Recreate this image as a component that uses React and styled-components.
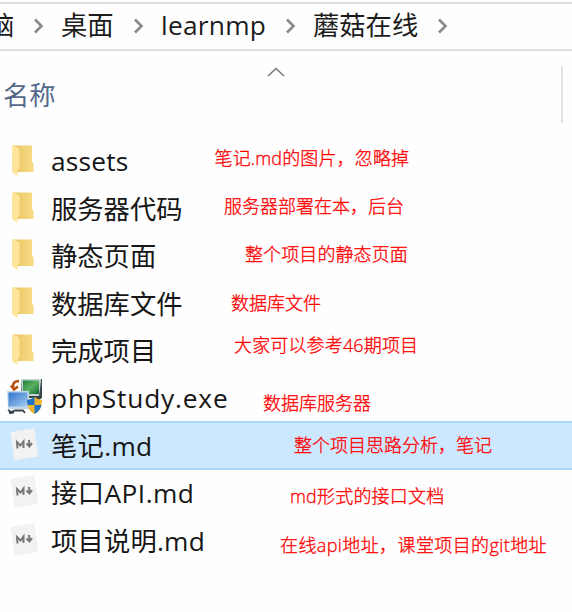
import React from "react";
import styled, { createGlobalStyle } from "styled-components";

const Global = createGlobalStyle`
  * { box-sizing: border-box; }
  body { margin: 0; background: #fff; font-family: "Open Sans", "Noto Sans CJK SC", sans-serif; }
`;

const Window = styled.main`
  width: 572px;
  height: 612px;
  overflow: hidden;
  background: #fefefe;
`;

const AddressBar = styled.nav`
  display: flex;
  align-items: center;
  height: 49px;
  margin-top: 2px;
  border-top: 2px solid #dedede;
  border-bottom: 2px solid #dedede;
`;

const Crumb = styled.span`
  flex: none;
  width: ${(p) => p.$width}px;
  margin-left: ${(p) => p.$gap}px;
  padding-bottom: 3px;
  font-size: 26.3px;
  line-height: 40px;
  letter-spacing: ${(p) => p.$spacing || 0}px;
  white-space: nowrap;
  color: #1c1c1c;
`;

const CrumbArrow = styled.svg`
  flex: none;
  width: 12px;
  height: 18px;
  margin-left: ${(p) => p.$gap}px;
  margin-bottom: 1px;
`;

const Header = styled.header`
  display: flex;
  justify-content: space-between;
  height: 86px;
  padding: 15px 9px 0 3px;
`;

const HeaderLabel = styled.span`
  flex: 1;
  padding-top: 9px;
  font-size: 26.3px;
  line-height: 40px;
  color: #53698a;
`;

const SortArrow = styled.svg`
  flex: none;
  width: 20px;
  height: 12px;
  margin-right: 275px;
`;

const Divider = styled.i`
  width: 2px;
  height: 57px;
  background: #e4e4e4;
`;

const FileList = styled.ul`
  margin: 0;
  padding: 0;
  list-style: none;
`;

const Row = styled.li`
  position: relative;
  display: flex;
  align-items: center;
  height: 47.4px;
  background: ${(p) => (p.$selected ? "#cce8ff" : "transparent")};
  box-shadow: ${(p) => (p.$selected ? "inset 0 2px #a9d6fb, inset 0 -1px #a9d6fb, 0 1px #a9d6fb" : "none")};
`;

const IconSlot = styled.span`
  flex: none;
  display: flex;
  width: 51px;
  height: 40px;
`;

const FileName = styled.span`
  padding-top: 1.4px;
  font-size: 26.3px;
  line-height: 40px;
  letter-spacing: ${(p) => p.$spacing || 0}px;
  white-space: nowrap;
  color: #161616;
`;

const Note = styled.span`
  position: absolute;
  left: ${(p) => p.$x}px;
  top: ${(p) => p.$y}px;
  font-size: 18px;
  font-weight: 300;
  line-height: 24px;
  letter-spacing: ${(p) => p.$spacing || 0}px;
  white-space: nowrap;
  color: #ff0000;
  -webkit-text-stroke: 0.3px #ff0000;
`;

const FolderIcon = () => (
  <svg width="44" height="40" viewBox="0 0 44 40">
    <defs>
      <linearGradient id="folder" x1="0" x2="1">
        <stop offset="0.2" stopColor="#ecc968" />
        <stop offset="1" stopColor="#f8dc86" />
      </linearGradient>
    </defs>
    <path d="M13 4.5H32V21L33.5 22.5V31H17Z" fill="url(#folder)" />
    <path d="M12 4.5L18 6.5Q19.5 7.5 19.5 9.5V27.5L17.5 29.5V35L12 31Z" fill="#ffe59c" />
  </svg>
);

const MarkdownIcon = () => (
  <svg width="44" height="40" viewBox="0 0 44 40">
    <path d="M10.5 7L34 3.5L38.5 31.5L14.5 35.5Z" fill="#f2f2f2" />
    <g fill="none" stroke="#777" strokeWidth="2">
      <path d="M17.5 23.5L17 17L20.5 20.5L23.5 16.5V23" />
      <path d="M29 15L29.5 21.5M26.5 18.5L29.5 21.5L32 18" />
    </g>
  </svg>
);

const ProgramIcon = () => (
  <svg width="44" height="40" viewBox="0 0 44 40">
    <defs>
      <linearGradient id="green" x1="0" y1="0" x2="1" y2="1">
        <stop offset="0" stopColor="#1d7b39" />
        <stop offset=".5" stopColor="#58b264" />
        <stop offset="1" stopColor="#14682e" />
      </linearGradient>
      <linearGradient id="blue" x1="0" y1="0" x2="1" y2="1">
        <stop offset="0" stopColor="#2f72cc" />
        <stop offset="1" stopColor="#a5cef2" />
      </linearGradient>
    </defs>
    <path d="M21 1H42V20L39 22L21 18Z" fill="#35474a" />
    <path d="M21 1H41V3L39 18H22Z" fill="#c5d5d5" />
    <path d="M23 2.5H39V16H23Z" fill="url(#green)" />
    <path d="M13.5 11C12 6 14 3 19 3M11 7.5L14 11.5L18 8.5" fill="none" stroke="#b85010" strokeWidth="2.6" />
    <path d="M7 13H29V31H8Z" fill="#c2d8ec" />
    <path d="M8.5 14.5H27.5V28.5H8.5Z" fill="url(#blue)" />
    <path d="M8 32L11 34L15 32.5H23L25 35M9 35L14 34.5" fill="none" stroke="#39434a" strokeWidth="1.8" />
    <path d="M27 22Q31 22 34.5 19Q38 22 42 22Q42 33 34.5 36Q27 33 27 22" fill="#f1b52e" />
    <path d="M34.5 19Q31 22 27 22L27.5 27H34.5ZM41.5 27H34.5V36Q40 33 41.5 27" fill="#1b74ca" />
  </svg>
);

const icons = { folder: FolderIcon, md: MarkdownIcon, exe: ProgramIcon };

const files = [
  { name: "assets", icon: "folder", note: "笔记.md的图片，忽略掉", x: 214.5, y: 9, spacing: 0.2, noteSpacing: 0.15 },
  { name: "服务器代码", icon: "folder", note: "服务器部署在本，后台", x: 224, y: 10 },
  { name: "静态页面", icon: "folder", note: "整个项目的静态页面", x: 245, y: 10, noteSpacing: 0.1 },
  { name: "数据库文件", icon: "folder", note: "数据库文件", x: 231, y: 12 },
  { name: "完成项目", icon: "folder", note: "大家可以参考46期项目", x: 234, y: 6, noteSpacing: 0.15 },
  { name: "phpStudy.exe", icon: "exe", note: "数据库服务器", x: 263, y: 17.5, spacing: 0.82 },
  { name: "笔记.md", icon: "md", note: "整个项目思路分析，笔记", x: 294, y: 12, selected: true, spacing: 0.3 },
  { name: "接口API.md", icon: "md", note: "md形式的接口文档", x: 290, y: 15, spacing: 0.45, noteSpacing: 0.2 },
  { name: "项目说明.md", icon: "md", note: "在线api地址，课堂项目的git地址", x: 280, y: 17, spacing: 0.2, noteSpacing: 0.4 },
];

const Arrow = ({ gap }) => (
  <CrumbArrow $gap={gap} viewBox="0 0 12 18">
    <path d="M2 2.5L8.5 9L2 15.5" fill="none" stroke="#8a8a8a" strokeWidth="2.6" />
  </CrumbArrow>
);

export default function App() {
  return (
    <>
      <Global />
      <Window>
        <AddressBar>
          <Crumb $gap={-12} $width={27}>脑</Crumb>
          <Arrow gap={18} />
          <Crumb $gap={16} $width={53}>桌面</Crumb>
          <Arrow gap={19} />
          <Crumb $gap={16} $width={105} $spacing={0.25}>learnmp</Crumb>
          <Arrow gap={19} />
          <Crumb $gap={16} $width={106}>蘑菇在线</Crumb>
          <Arrow gap={18} />
        </AddressBar>
        <Header>
          <HeaderLabel>名称</HeaderLabel>
          <SortArrow viewBox="0 0 20 12">
            <path d="M2 10L10 2.5L18 10" fill="none" stroke="#777" strokeWidth="1.6" />
          </SortArrow>
          <Divider />
        </Header>
        <FileList>
          {files.map((f) => {
            const Icon = icons[f.icon];
            return (
              <Row key={f.name} $selected={f.selected}>
                <IconSlot><Icon /></IconSlot>
                <FileName $spacing={f.spacing}>{f.name}</FileName>
                <Note $x={f.x} $y={f.y} $spacing={f.noteSpacing}>{f.note}</Note>
              </Row>
            );
          })}
        </FileList>
      </Window>
    </>
  );
}
